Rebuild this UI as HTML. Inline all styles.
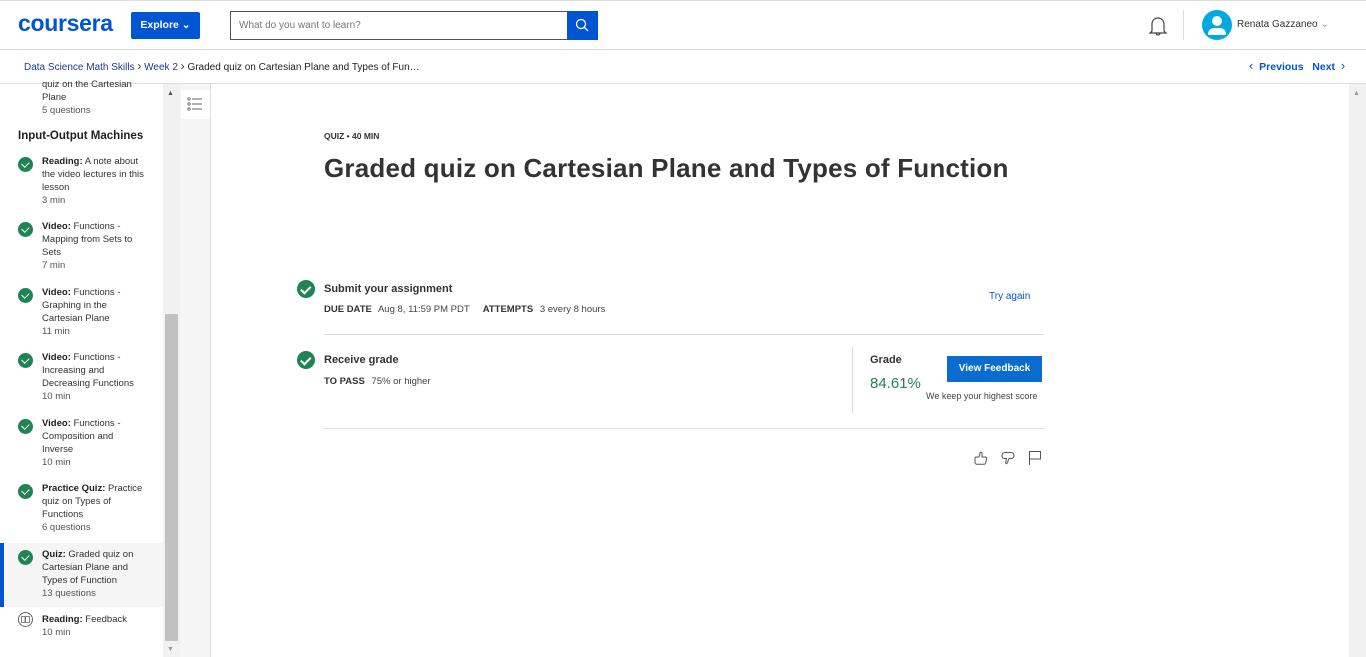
<!DOCTYPE html>
<html><head><meta charset="utf-8"><style>
*{box-sizing:border-box;margin:0;padding:0}
body{width:1366px;height:657px;overflow:hidden;background:#fff;font-family:"Liberation Sans",sans-serif;color:#1f1f1f;position:relative}
.a{position:absolute;white-space:nowrap}
.hdr{position:absolute;left:0;top:0;width:1366px;height:50px;border-top:1px solid #ddd;border-bottom:1px solid #ddd;background:#fff}
.bc{position:absolute;left:0;top:50px;width:1366px;height:34px;border-bottom:1px solid #ddd}
.item{position:absolute;left:42px;font-size:9.5px;line-height:13px;color:#333}
.item b{color:#1f1f1f}
.item .m{color:#555;line-height:14px}
.chk{position:absolute;left:18px;width:15px;height:15px;border-radius:50%;background:#1f8354}
.chk:after{content:"";position:absolute;left:4.5px;top:3px;width:3.5px;height:6px;border:solid #fff;border-width:0 1.5px 1.5px 0;transform:rotate(45deg)}
.bchk{position:absolute;width:18px;height:18px;border-radius:50%;background:#1f8354}
.bchk:after{content:"";position:absolute;left:6px;top:3.5px;width:4px;height:7.5px;border:solid #fff;border-width:0 2px 2px 0;transform:rotate(45deg)}
.sm{font-size:9.5px;color:#444}
.sm b{color:#333;font-size:9.5px;margin-right:4px}
</style></head><body>
<div class="hdr"></div>
<div class="a" style="left:18px;top:10px;font-size:23px;font-weight:bold;color:#0056d2;letter-spacing:-0.3px">coursera</div>
<div class="a" style="left:131px;top:12px;width:69px;height:27px;background:#0056d2;border-radius:2px;color:#fff;font-size:10.5px;font-weight:bold;line-height:27px;text-align:center">Explore &#8964;</div>
<div class="a" style="left:230px;top:11px;width:368px;height:29px;border:1px solid #555;font-size:10px;color:#777;line-height:27px;padding-left:8px">What do you want to learn?</div>
<div class="a" style="left:567px;top:11px;width:31px;height:29px;background:#0056d2"></div>
<svg class="a" style="left:574px;top:17px" width="16" height="16" viewBox="0 0 16 16"><circle cx="7" cy="7" r="4.5" fill="none" stroke="#fff" stroke-width="1.3"/><path d="M10.3 10.3L14 14" stroke="#fff" stroke-width="1.3"/></svg>
<svg class="a" style="left:1148px;top:15px" width="20" height="22" viewBox="0 0 20 22"><path d="M4 16V9a6 6 0 0 1 12 0v7l2 2H2z M8 18a2 2 0 0 0 4 0" fill="none" stroke="#444" stroke-width="1.2"/></svg>
<div class="a" style="left:1183px;top:10px;width:1px;height:30px;background:#ddd"></div>
<div class="a" style="left:1202px;top:10px;width:30px;height:30px;border-radius:50%;background:#00a9e0;overflow:hidden"><div class="a" style="left:10px;top:6px;width:10px;height:10px;border-radius:50%;background:#fff"></div><div class="a" style="left:6px;top:18px;width:18px;height:7px;border-radius:6px 6px 1px 1px;background:#fff"></div></div>
<div class="a" style="left:1237px;top:19px;font-size:10px;color:#333">Renata Gazzaneo <span style="color:#999">&#8964;</span></div>
<div class="bc"></div>
<div class="a" style="left:24px;top:59px;font-size:10px;color:#1f3a8f">Data Science Math Skills <span style="color:#333;font-size:12px">&#8250;</span> Week 2 <span style="color:#333;font-size:12px">&#8250;</span> <span style="color:#1f1f1f">Graded quiz on Cartesian Plane and Types of Fun…</span></div>
<div class="a" style="left:1249px;top:58px;font-size:10.5px;font-weight:bold;color:#0056d2"><span style="font-weight:normal;font-size:13px">&#8249;</span>&nbsp; Previous &nbsp; Next &nbsp;<span style="font-weight:normal;font-size:13px">&#8250;</span></div>

<!-- sidebar -->
<div class="a" style="left:0;top:543px;width:163px;height:64px;background:#f5f5f5"></div>
<div class="a" style="left:0;top:543px;width:4px;height:64px;background:#0056d2"></div>
<div class="a" style="left:163px;top:84px;width:17px;height:573px;background:#f1f1f1"></div>
<div class="a" style="left:165px;top:314px;width:13px;height:327px;background:#c1c1c1"></div>
<div class="a" style="left:167px;top:90px;font-size:7px;color:#555">&#9650;</div>
<div class="a" style="left:167px;top:646px;font-size:7px;color:#999">&#9660;</div>
<div class="a" style="left:180px;top:84px;width:31px;height:573px;background:#f5f5f5;border-right:1px solid #ddd"></div>
<div class="a" style="left:181px;top:90px;width:29px;height:29px;background:#fff"></div>
<svg class="a" style="left:187px;top:97px" width="16" height="14" viewBox="0 0 16 14"><g fill="none" stroke="#666" stroke-width="0.9"><circle cx="2" cy="2" r="1.2"/><circle cx="2" cy="7" r="1.2"/><circle cx="2" cy="12" r="1.2"/><path d="M5 2h10M5 7h10M5 12h10"/></g></svg>
<div class="a" style="left:1349px;top:84px;width:17px;height:573px;background:#f1f1f1"></div>
<div class="a" style="left:1353px;top:90px;font-size:7px;color:#999">&#9650;</div>

<div class="item" style="top:78px">quiz on the Cartesian<br>Plane<div class="m">5 questions</div></div>
<div class="a" style="left:18px;top:130px;font-size:11.5px;font-weight:bold;color:#1f1f1f">Input-Output Machines</div>
<div class="chk" style="top:157px"></div><div class="item" style="top:155px"><b>Reading:</b> A note about<br>the video lectures in this<br>lesson<div class="m">3 min</div></div>
<div class="chk" style="top:222px"></div><div class="item" style="top:220px"><b>Video:</b> Functions -<br>Mapping from Sets to<br>Sets<div class="m">7 min</div></div>
<div class="chk" style="top:288px"></div><div class="item" style="top:286px"><b>Video:</b> Functions -<br>Graphing in the<br>Cartesian Plane<div class="m">11 min</div></div>
<div class="chk" style="top:353px"></div><div class="item" style="top:351px"><b>Video:</b> Functions -<br>Increasing and<br>Decreasing Functions<div class="m">10 min</div></div>
<div class="chk" style="top:419px"></div><div class="item" style="top:417px"><b>Video:</b> Functions -<br>Composition and<br>Inverse<div class="m">10 min</div></div>
<div class="chk" style="top:484px"></div><div class="item" style="top:482px"><b>Practice Quiz:</b> Practice<br>quiz on Types of<br>Functions<div class="m">6 questions</div></div>
<div class="chk" style="top:550px"></div><div class="item" style="top:548px"><b>Quiz:</b> Graded quiz on<br>Cartesian Plane and<br>Types of Function<div class="m">13 questions</div></div>
<div class="a" style="left:18px;top:612px;width:15px;height:15px;border-radius:50%;border:1px solid #666"></div>
<svg class="a" style="left:21px;top:616px" width="9" height="7" viewBox="0 0 9 7"><path d="M0.5 0.5h3.5v6h-3.5z M4.5 0.5h4v6h-4z" fill="none" stroke="#666" stroke-width="0.8"/></svg>
<div class="item" style="top:613px"><b>Reading:</b> Feedback<div class="m">10 min</div></div>

<!-- main -->
<div class="a" style="left:324px;top:131px;font-size:8.5px;font-weight:bold;color:#333">QUIZ • 40 MIN</div>
<div class="a" style="left:324px;top:153px;font-size:26px;font-weight:bold;color:#333;letter-spacing:0.2px">Graded quiz on Cartesian Plane and Types of Function</div>

<div class="bchk" style="left:297px;top:280px"></div>
<div class="a" style="left:324px;top:283px;font-size:11px;font-weight:bold;color:#333">Submit your assignment</div>
<div class="a sm" style="left:324px;top:304px"><b>DUE DATE</b> Aug 8, 11:59 PM PDT &nbsp;&nbsp;&nbsp; <b>ATTEMPTS</b> 3 every 8 hours</div>
<div class="a" style="left:989px;top:291px;font-size:10px;color:#0056d2">Try again</div>
<div class="a" style="left:324px;top:334px;width:720px;height:1px;background:#ddd"></div>

<div class="bchk" style="left:297px;top:351px"></div>
<div class="a" style="left:324px;top:354px;font-size:11px;font-weight:bold;color:#333">Receive grade</div>
<div class="a sm" style="left:324px;top:376px"><b>TO PASS</b> 75% or higher</div>
<div class="a" style="left:852px;top:346px;width:1px;height:68px;background:#ddd"></div>
<div class="a" style="left:870px;top:354px;font-size:11px;font-weight:bold;color:#333">Grade</div>
<div class="a" style="left:870px;top:375px;font-size:15px;color:#1f8354">84.61%</div>
<div class="a" style="left:947px;top:356px;width:95px;height:26px;background:#0a6ccf;color:#fff;font-size:10px;font-weight:bold;line-height:26px;text-align:center">View Feedback</div>
<div class="a" style="left:926px;top:391px;font-size:9px;color:#444">We keep your highest score</div>
<div class="a" style="left:324px;top:428px;width:720px;height:1px;background:#ddd"></div>

<svg class="a" style="left:973px;top:450px" width="16" height="16" viewBox="0 0 16 16"><path d="M2 8.5c0-1 .8-1.5 1.5-1.5H6L7 3c.3-1 2-1 2 .5V7h3.5c1 0 1.5 1 1.2 1.8l-1.2 4.5c-.2.6-.7 1-1.3 1H4c-1 0-2-1-2-2z" fill="none" stroke="#555" stroke-width="1"/></svg>
<svg class="a" style="left:1000px;top:450px" width="16" height="16" viewBox="0 0 16 16"><path d="M2 5.5c0-2 1.5-3 3.5-3h5c2 0 3.5 1 3.5 3 0 1.5-1 3-2.5 3H9l-2 5c-.5.5-1.5 0-1.3-.8L6.5 8.5H4c-1.2 0-2-1.2-2-3z" fill="none" stroke="#555" stroke-width="1"/></svg>
<svg class="a" style="left:1028px;top:450px" width="14" height="16" viewBox="0 0 14 16"><path d="M1.5 15V1.5h11V9h-11" fill="none" stroke="#555" stroke-width="1"/></svg>
</body></html>
